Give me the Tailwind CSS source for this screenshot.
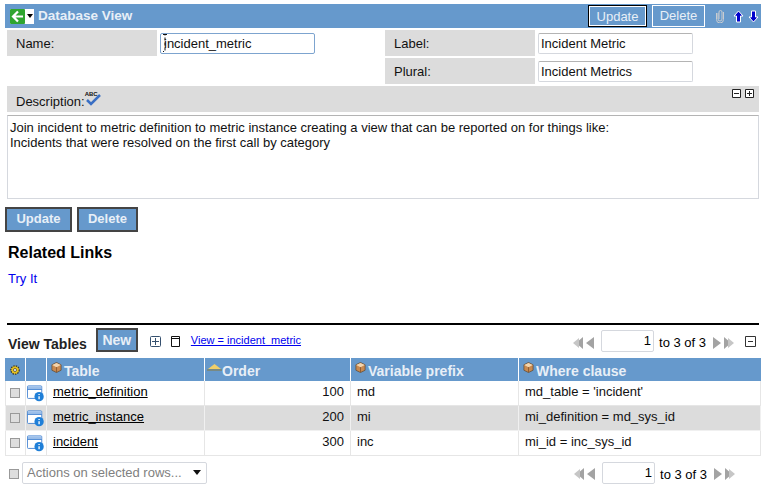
<!DOCTYPE html>
<html lang="en">
<head>
    <script src="https://cdn.jsdelivr.net/npm/@tailwindcss/browser@4"></script>
</head>
<body class="bg-white font-['Liberation_Sans',Arial,sans-serif] text-[13px] text-black overflow-hidden">
    <svg class="hidden">
        <symbol id="cube" viewBox="0 0 12 12">
            <path d="M6 .5 11 3v6l-5 2.500L1 9V3z" fill="#c98a50" stroke="#5f4a34" stroke-width=".8"/>
            <path d="M1.300 3.200 6 5.600l4.700-2.400L6 1z" fill="#f2d5ae"/>
            <path d="M6 5.600v5.600" stroke="#8a5a30"/>
        </symbol>
        <symbol id="info" viewBox="0 0 19 18">
            <rect x=".5" y=".5" width="16" height="14" rx="1" fill="#fff" stroke="#3f7fd0"/>
            <path d="M1 1h15v3H1z" fill="#9cbfea"/>
            <path d="M.5 4.500h16" stroke="#3f7fd0"/>
            <circle cx="13.500" cy="12.500" r="5.200" fill="#1f7fd8"/>
            <path d="M13.500 9.500v1.200M13.500 12v3.500" stroke="#fff" stroke-width="1.500"/>
        </symbol>
        <symbol id="first" viewBox="0 0 22 12">
            <path d="M10 0v12L3 6zM21 0v12l-8-6z" fill="#a3a3a3"/>
            <path d="M6 1v10L0 6z" fill="#c6c6c6"/>
        </symbol>
        <symbol id="last" viewBox="0 0 22 12">
            <path d="M1 0v12l8-6zM12 0v12l7-6z" fill="#a3a3a3"/>
            <path d="M16 1v10l6-5z" fill="#c6c6c6"/>
        </symbol>
    </svg>

    <div class="mx-[5px] mt-[4px] w-[756px] h-[24px] bg-[#6699cc] flex items-center">
        <div class="ml-[5px] w-[24px] h-[15px] bg-white flex items-center">
            <svg width="15" height="15" viewBox="0 0 15 15">
                <rect width="15" height="15" rx="1" fill="#2fa52f"/>
                <path d="M8 2.500 3 7.500l5 5M3.500 7.500H13" fill="none" stroke="#fff" stroke-width="2.200"/>
            </svg>
            <svg class="ml-[2px]" width="6" height="4" viewBox="0 0 6 4"><path d="M0 0h6L3 4z"/></svg>
        </div>
        <span class="ml-[4px] text-[13.5px] font-bold text-[#e8eff7]">Database View</span>
        <button class="ml-auto w-[59px] h-[22px] bg-[#6699cc] border-2 border-black outline outline-1 -outline-offset-2 outline-white text-[#e8eff7]">Update</button>
        <button class="ml-[5px] w-[53px] h-[22px] bg-[#6699cc] border border-white text-[#e8eff7]">Delete</button>
        <svg class="ml-[10px]" width="10" height="14" viewBox="0 0 10 14"><path d="M3 4v6a2 2 0 0 0 4 0V3a1.500 1.500 0 0 0-3 0v7M1.500 4v6.500a3.500 3.500 0 0 0 7 0V3" fill="none" stroke="#c9ccd0" stroke-width="1"/></svg>
        <svg class="ml-[8px]" width="11" height="13" viewBox="0 0 11 13"><path d="M5.500 1 10 6H7.500v6h-4V6H1z" fill="#0000cc" stroke="#fff"/></svg>
        <svg class="ml-[4px] mr-[2px]" width="11" height="13" viewBox="0 0 11 13"><path d="M5.500 12 10 7H7.500V1h-4v6H1z" fill="#0000cc" stroke="#fff"/></svg>
    </div>

    <div class="mx-[7px] mt-[2px] w-[752px] grid grid-cols-[150px_228px_150px_1fr] gap-y-[2px] h-[54px] text-[#111]">
        <div class="h-[26px] bg-[#dcdcdc] pl-[9px] pt-[2px] flex items-center">Name:</div>
        <div class="relative h-[26px] pl-[3px] flex items-center">
            <input class="w-[155px] h-[21px] border border-[#7da4cf] rounded-[2px] px-[3px] outline-none" value="incident_metric">
            <svg class="absolute left-[6px] top-[4px]" width="5" height="18" viewBox="0 0 5 18"><path d="M0 .5h2v17H0M2 .5h2" fill="none" stroke="#111" stroke-dasharray="3 2"/></svg>
        </div>
        <div class="h-[26px] bg-[#dcdcdc] pl-[9px] pt-[2px] flex items-center">Label:</div>
        <div class="h-[26px] pl-[3px] flex items-center">
            <input class="w-[155px] h-[21px] border border-[#d5d8de] border-t-[#b4b4b4] rounded-[2px] px-[2px] outline-none" value="Incident Metric">
        </div>
        <div class="col-start-3 h-[26px] bg-[#dcdcdc] pl-[9px] pt-[2px] flex items-center">Plural:</div>
        <div class="h-[26px] pl-[3px] flex items-center">
            <input class="w-[155px] h-[21px] border border-[#d5d8de] border-t-[#b4b4b4] rounded-[2px] px-[2px] outline-none" value="Incident Metrics">
        </div>
    </div>

    <div class="relative mx-[7px] mt-[2px] w-[752px] h-[26px] bg-[#dcdcdc] pl-[9px] pt-[6px] flex items-center text-[#111]">
        <span>Description:</span>
        <span class="relative w-[16px] h-[16px] -mt-[4px]">
            <span class="absolute left-0 -top-[2px] text-[6px] leading-[8px] font-bold">ABC</span>
            <svg class="absolute left-[1px] top-[2px]" width="15" height="12" viewBox="0 0 15 12"><path d="M1 6 5 10 14 1" fill="none" stroke="#3a6fc4" stroke-width="2.500"/></svg>
        </span>
        <div class="absolute right-[5px] top-[3px] flex gap-[4px]">
            <svg width="9" height="9" viewBox="0 0 9 9"><path d="M.5.500h8v8h-8zM2 4.500h5" fill="#fff" stroke="#222"/></svg>
            <svg width="9" height="9" viewBox="0 0 9 9"><path d="M.5.500h8v8h-8zM2 4.500h5M4.500 2v5" fill="#fff" stroke="#222"/></svg>
        </div>
    </div>

    <div class="mx-[7px] mt-[3px] w-[752px] h-[84px] border border-[#d5d8de] border-t-[#b4b4b4] px-[2px] pt-[4px] leading-[15px] text-[#111]">
        <div>Join incident to metric definition to metric instance creating a view that can be reported on for things like:</div>
        <div>Incidents that were resolved on the first call by category</div>
    </div>

    <div class="ml-[5px] mt-[8px] flex gap-[5px]">
        <button class="w-[67px] h-[25px] bg-[#6699cc] border-2 border-[#444] pb-[2px] text-[13px] font-bold text-[#e8eff7]">Update</button>
        <button class="w-[61px] h-[25px] bg-[#6699cc] border-2 border-[#444] pb-[2px] text-[13px] font-bold text-[#e8eff7]">Delete</button>
    </div>

    <h2 class="ml-[8px] mt-[12px] text-[16px] leading-[18px] font-bold">Related Links</h2>
    <a class="block ml-[8px] mt-[10px] leading-[14px] text-[#0000ee]">Try It</a>

    <div class="mx-[7px] mt-[37px] w-[752px] h-[2px] bg-black"></div>

    <div class="mx-[7px] mt-[2px] w-[752px] h-[31px] flex items-center">
        <span class="ml-[1px] mt-[3px] text-[14px] font-bold text-[#222]">View Tables</span>
        <button class="ml-[9px] w-[42px] h-[24px] bg-[#6699cc] border-2 border-[#444] pb-[2px] text-[14px] font-bold text-[#e8eff7] -mt-[5px]">New</button>
        <svg class="ml-[12px] -mt-[3px]" width="11" height="11" viewBox="0 0 11 11"><rect x=".5" y=".5" width="10" height="10" rx="1" fill="#fff" stroke="#35506e"/><path d="M2 5.500h7M5.500 2v7" stroke="#35506e"/></svg>
        <svg class="ml-[10px] -mt-[3px]" width="9" height="11" viewBox="0 0 9 11"><path d="M.5.500h8v10h-8zM.5 2.500h8" fill="#fff" stroke="#111"/></svg>
        <a class="ml-[11px] -mt-[4px] text-[11px] text-[#0000ee] underline">View = incident_metric</a>
        <div class="ml-auto flex items-center">
            <svg width="22" height="12"><use href="#first"/></svg>
            <input class="ml-[6px] -mt-[4px] w-[53px] h-[22px] border border-[#d5d8de] rounded-[2px] text-right px-[2px] outline-none" value="1">
            <span class="ml-[5px]">to 3 of 3</span>
            <svg class="ml-[6px]" width="22" height="12"><use href="#last"/></svg>
            <svg class="ml-[11px] mr-[3px] -mt-[3px]" width="11" height="11" viewBox="0 0 11 11"><path d="M.5.500h10v10H.5zM3 5.500h5" fill="#fff" stroke="#333"/></svg>
        </div>
    </div>

    <table class="ml-[5px] w-[756px] table-fixed border-separate border-spacing-0 text-[#111]">
        <colgroup>
            <col class="w-[21px]"><col class="w-[21px]"><col class="w-[158px]"><col class="w-[146px]"><col class="w-[168px]"><col>
        </colgroup>
        <thead>
            <tr class="h-[23px] bg-[#6699cc] text-[14px] font-bold text-[#e8eff7]">
                <th class="border-r border-white pl-[4px]">
                    <svg width="12" height="12" viewBox="0 0 12 12"><circle cx="6" cy="6" r="4.200" fill="#e6c21e" stroke="#333" stroke-width="1.200" stroke-dasharray="1.500 1"/><circle cx="6" cy="6" r="1.500" fill="#fff" stroke="#333" stroke-width=".7"/></svg>
                </th>
                <th class="border-r border-white"></th>
                <th class="border-r border-white text-left pl-[4px]">
                    <div class="flex items-end h-[21px]"><svg class="mb-[7px]" width="11" height="11"><use href="#cube"/></svg><span class="ml-[2px] -mb-[2px]">Table</span></div>
                </th>
                <th class="border-r border-white text-left pl-[2px]">
                    <div class="flex items-end h-[21px]"><svg class="mb-[9px]" width="15" height="7" viewBox="0 0 15 7"><path d="M1 5 7.500 0 14 5z" fill="#f0cf6a"/><path d="M0 6h15" stroke="#8a7a3a"/></svg><span class="-mb-[2px]">Order</span></div>
                </th>
                <th class="border-r border-white text-left pl-[4px]">
                    <div class="flex items-end h-[21px]"><svg class="mb-[7px]" width="11" height="11"><use href="#cube"/></svg><span class="ml-[2px] -mb-[2px]">Variable prefix</span></div>
                </th>
                <th class="text-left pl-[4px]">
                    <div class="flex items-end h-[21px]"><svg class="mb-[7px]" width="11" height="11"><use href="#cube"/></svg><span class="ml-[2px] -mb-[2px]">Where clause</span></div>
                </th>
            </tr>
        </thead>
        <tbody class="[&_td:nth-child(n+3)]:pb-[2px]">
            <tr class="h-[25px] bg-white">
                <td class="border-x border-b border-[#e6e6e6] pl-[4px]"><span class="block w-[10px] h-[10px] border border-[#999] bg-[#dedede]"></span></td>
                <td class="border-r border-b border-[#e6e6e6] pl-[1px]"><svg class="block" width="17" height="17"><use href="#info"/></svg></td>
                <td class="border-r border-b border-[#e6e6e6] pl-[6px] underline text-black">metric_definition</td>
                <td class="border-r border-b border-[#e6e6e6] text-right pr-[6px]">100</td>
                <td class="border-r border-b border-[#e6e6e6] pl-[6px]">md</td>
                <td class="border-r border-b border-[#e6e6e6] pl-[6px]">md_table = 'incident'</td>
            </tr>
            <tr class="h-[25px] bg-[#dcdcdc]">
                <td class="border-x border-b border-[#f0f0f0] pl-[4px]"><span class="block w-[10px] h-[10px] border border-[#999] bg-[#dedede]"></span></td>
                <td class="border-r border-b border-[#f0f0f0] pl-[1px]"><svg class="block" width="17" height="17"><use href="#info"/></svg></td>
                <td class="border-r border-b border-[#f0f0f0] pl-[6px] underline text-black">metric_instance</td>
                <td class="border-r border-b border-[#f0f0f0] text-right pr-[6px]">200</td>
                <td class="border-r border-b border-[#f0f0f0] pl-[6px]">mi</td>
                <td class="border-r border-b border-[#f0f0f0] pl-[6px]">mi_definition = md_sys_id</td>
            </tr>
            <tr class="h-[25px] bg-white">
                <td class="border-x border-b border-[#e6e6e6] pl-[4px]"><span class="block w-[10px] h-[10px] border border-[#999] bg-[#dedede]"></span></td>
                <td class="border-r border-b border-[#e6e6e6] pl-[1px]"><svg class="block" width="17" height="17"><use href="#info"/></svg></td>
                <td class="border-r border-b border-[#e6e6e6] pl-[6px] underline text-black">incident</td>
                <td class="border-r border-b border-[#e6e6e6] text-right pr-[6px]">300</td>
                <td class="border-r border-b border-[#e6e6e6] pl-[6px]">inc</td>
                <td class="border-r border-b border-[#e6e6e6] pl-[6px]">mi_id = inc_sys_id</td>
            </tr>
        </tbody>
    </table>

    <div class="mx-[8px] mt-[6px] w-[745px] h-[23px] flex items-center">
        <span class="ml-[1px] w-[10px] h-[10px] border border-[#999] bg-[#dedede]"></span>
        <div class="ml-[3px] -mt-[2px] w-[185px] h-[22px] border border-[#d5d8de] rounded-[2px] flex items-center pl-[4px] text-[#808080]">
            Actions on selected rows...
            <svg class="ml-auto mr-[5px]" width="8" height="5" viewBox="0 0 8 5"><path d="M0 0h8L4 5z" fill="#111"/></svg>
        </div>
        <div class="ml-auto mr-[18px] flex items-center">
            <svg width="22" height="12"><use href="#first"/></svg>
            <input class="ml-[6px] -mt-[2px] w-[53px] h-[22px] border border-[#d5d8de] rounded-[2px] text-right px-[2px] outline-none" value="1">
            <span class="ml-[5px] mt-[2px]">to 3 of 3</span>
            <svg class="ml-[6px]" width="22" height="12"><use href="#last"/></svg>
        </div>
    </div>
</body>
</html>
